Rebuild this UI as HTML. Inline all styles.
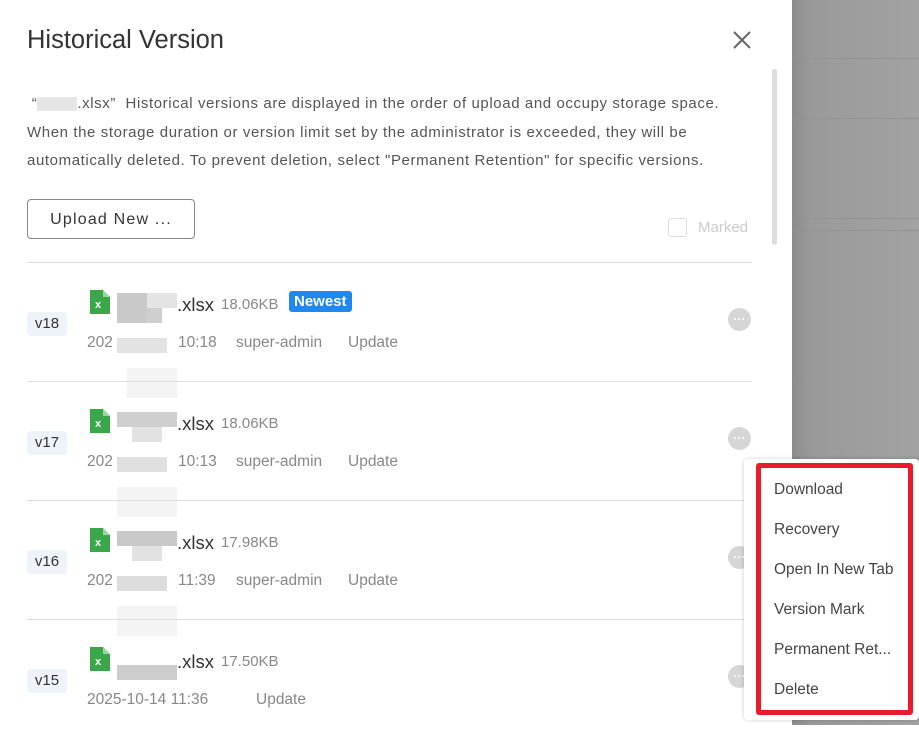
<!DOCTYPE html>
<html><head><style>
body{margin:0;width:919px;height:725px;overflow:hidden;font-family:"Liberation Sans",sans-serif;position:relative;background:#fff}
.bg{position:absolute;left:792px;top:0;width:127px;height:725px;background:linear-gradient(90deg,#8c8c8c,#9a9a9a 15%,#a2a2a2)}
.bg i{position:absolute;left:0;right:0;height:1px;background:#929292}
.panel{position:absolute;left:0;top:0;width:792px;height:725px;background:#fff}
h1{position:absolute;left:27px;top:26px;margin:0;font-size:25.5px;font-weight:normal;color:#333}
.x{position:absolute;left:731px;top:29px;width:22px;height:22px}
.desc{position:absolute;left:27px;top:90px;width:760px;font-size:15px;line-height:28.5px;color:#555;letter-spacing:0.6px;white-space:nowrap}
.btn{position:absolute;left:27px;top:199px;width:168px;height:40px;border:1px solid #888;border-radius:4px;box-sizing:border-box;font-size:16px;color:#333;text-align:center;line-height:40px;letter-spacing:1.2px}
.cb{position:absolute;left:668px;top:218px;width:17px;height:17px;border:1px solid #ddd;border-radius:3px}
.mk{position:absolute;left:698px;top:219px;font-size:15px;color:#ccc}
.sb{position:absolute;left:772px;top:69px;width:5px;height:176px;background:#ddd;border-radius:3px}
.row{position:absolute;left:27px;width:725px;height:119px;border-top:1px solid #ddd}
.v{position:absolute;left:0;top:49px;width:40px;height:24px;background:#eef3fa;border-radius:4px;font-size:15px;color:#333;text-align:center;line-height:24px}
.ic{position:absolute;left:63px;top:27px;width:20px;height:24px}
.blur{position:absolute;left:90px;top:30px;width:60px;height:100px}
.blur b{position:absolute}
.fn{position:absolute;left:150px;top:31px;font-size:18.5px;color:#333}
.sz{position:absolute;left:194px;top:33px;font-size:15px;color:#888}
.nw{position:absolute;left:262px;top:28px;background:#1e88f0;color:#fff;font-weight:bold;font-size:15px;padding:2px 5px;border-radius:3px}
.m{position:absolute;top:71px;font-size:15.5px;color:#888;white-space:pre}
.dot{position:absolute;left:701px;top:45px;width:23px;height:23px;border-radius:50%;background:#d6d6d6}
.dot:after{content:"";position:absolute;left:6px;top:10px;width:2px;height:2px;background:#fff;border-radius:1px;box-shadow:4px 0 #fff,8px 0 #fff}
.menu{position:absolute;left:744px;top:459px;width:175px;height:261px;background:#fff;border-radius:4px;box-shadow:0 0 4px rgba(0,0,0,.2)}
.red{position:absolute;left:756px;top:463px;width:147px;height:242px;border:5px solid #e81c2a;border-radius:3px}
.mi{position:absolute;left:774px;font-size:15.5px;color:#444}
</style></head><body>
<div class="bg"><i style="top:58px"></i><i style="top:118px"></i><i style="top:218px"></i><i style="top:230px"></i></div>
<div class="panel">
<h1>Historical Version</h1>
<svg class="x" viewBox="0 0 22 22"><path d="M3 3L19 19M19 3L3 19" stroke="#666" stroke-width="2"/></svg>
<div class="desc">&nbsp;“<span style="display:inline-block;width:40px;height:14px;background:#e6e6e6;vertical-align:middle"></span>.xlsx” &nbsp;Historical versions are displayed in the order of upload and occupy storage space.<br>When the storage duration or version limit set by the administrator is exceeded, they will be<br>automatically deleted. To prevent deletion, select "Permanent Retention" for specific versions.</div>
<div class="btn">Upload New ...</div>
<div class="cb"></div><div class="mk">Marked</div>
<div class="sb"></div>

<div class="row" style="top:262px"><div class="v">v18</div>
<svg class="ic" viewBox="0 0 20 24"><path d="M0 0H13L20 7V24H0Z" fill="#3aa84a"/><path d="M13 0V7H20Z" fill="#9ad7a0"/><text x="5" y="18" font-size="11" fill="#fff" font-weight="bold" font-family="Liberation Sans">x</text></svg>
<div class="blur"><b style="left:0;top:0;width:30px;height:30px;background:#c9c9c9"></b><b style="left:30px;top:0;width:30px;height:15px;background:#e4e4e4"></b><b style="left:30px;top:15px;width:15px;height:15px;background:#cfcfcf"></b><b style="left:0;top:45px;width:50px;height:15px;background:#e3e3e3"></b><b style="left:10px;top:75px;width:50px;height:30px;background:#f4f4f4"></b></div>
<div class="fn">.xlsx</div><div class="sz">18.06KB</div><div class="nw">Newest</div>
<div class="m" style="left:60px">202</div><div class="m" style="left:151px">10:18</div><div class="m" style="left:209px">super-admin</div><div class="m" style="left:321px">Update</div><div class="dot"></div></div>

<div class="row" style="top:381px"><div class="v">v17</div>
<svg class="ic" viewBox="0 0 20 24"><path d="M0 0H13L20 7V24H0Z" fill="#3aa84a"/><path d="M13 0V7H20Z" fill="#9ad7a0"/><text x="5" y="18" font-size="11" fill="#fff" font-weight="bold" font-family="Liberation Sans">x</text></svg>
<div class="blur"><b style="left:0;top:0;width:60px;height:15px;background:#cfcfcf"></b><b style="left:15px;top:15px;width:30px;height:15px;background:#e2e2e2"></b><b style="left:0;top:45px;width:50px;height:15px;background:#e0e0e0"></b><b style="left:0;top:75px;width:60px;height:30px;background:#f4f4f4"></b></div>
<div class="fn">.xlsx</div><div class="sz">18.06KB</div>
<div class="m" style="left:60px">202</div><div class="m" style="left:151px">10:13</div><div class="m" style="left:209px">super-admin</div><div class="m" style="left:321px">Update</div><div class="dot"></div></div>

<div class="row" style="top:500px"><div class="v">v16</div>
<svg class="ic" viewBox="0 0 20 24"><path d="M0 0H13L20 7V24H0Z" fill="#3aa84a"/><path d="M13 0V7H20Z" fill="#9ad7a0"/><text x="5" y="18" font-size="11" fill="#fff" font-weight="bold" font-family="Liberation Sans">x</text></svg>
<div class="blur"><b style="left:0;top:0;width:60px;height:15px;background:#c9c9c9"></b><b style="left:15px;top:15px;width:30px;height:15px;background:#e2e2e2"></b><b style="left:0;top:45px;width:50px;height:15px;background:#dcdcdc"></b><b style="left:0;top:75px;width:60px;height:30px;background:#f4f4f4"></b></div>
<div class="fn">.xlsx</div><div class="sz">17.98KB</div>
<div class="m" style="left:60px">202</div><div class="m" style="left:151px">11:39</div><div class="m" style="left:209px">super-admin</div><div class="m" style="left:321px">Update</div><div class="dot"></div></div>

<div class="row" style="top:619px"><div class="v">v15</div>
<svg class="ic" viewBox="0 0 20 24"><path d="M0 0H13L20 7V24H0Z" fill="#3aa84a"/><path d="M13 0V7H20Z" fill="#9ad7a0"/><text x="5" y="18" font-size="11" fill="#fff" font-weight="bold" font-family="Liberation Sans">x</text></svg>
<div class="blur"><b style="left:0;top:15px;width:60px;height:15px;background:#cdcdcd"></b></div>
<div class="fn">.xlsx</div><div class="sz">17.50KB</div>
<div class="m" style="left:60px">2025-10-14 11:36</div><div class="m" style="left:229px">Update</div><div class="dot"></div></div>
</div>

<div class="menu"></div>
<div class="red"></div>
<div class="mi" style="top:481px">Download</div>
<div class="mi" style="top:521px">Recovery</div>
<div class="mi" style="top:561px">Open In New Tab</div>
<div class="mi" style="top:601px">Version Mark</div>
<div class="mi" style="top:641px">Permanent Ret...</div>
<div class="mi" style="top:681px">Delete</div>
</body></html>
